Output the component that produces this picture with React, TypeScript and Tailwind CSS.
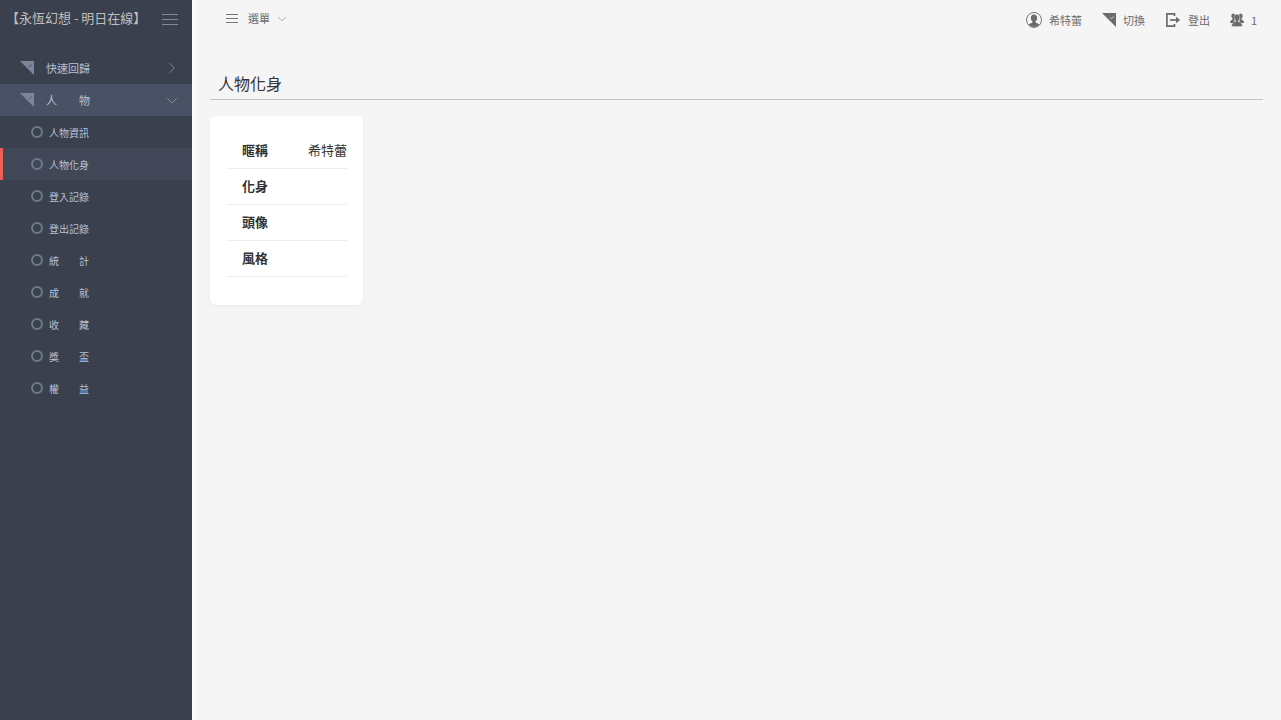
import type { ReactNode } from "react";

const characterLinks = [
  "人物資訊",
  "人物化身",
  "登入記錄",
  "登出記錄",
  "統　　計",
  "成　　就",
  "收　　藏",
  "獎　　盃",
  "權　　益",
];

const profileRows = [
  { label: "暱稱", value: "希特蕾" },
  { label: "化身", value: "" },
  { label: "頭像", value: "" },
  { label: "風格", value: "" },
];

const CornerIcon = ({ check }: { check: string }) => (
  <svg viewBox="0 0 14 14" className="w-3.5 h-3.5 shrink-0" fill="currentColor">
    <path d="M0 0H14V14Z" />
    <path d="M8 4.300l1.600 1.400L12 3.400" fill="none" stroke={check} strokeWidth="0.7" />
  </svg>
);

const Chevron = ({ d, className }: { d: string; className: string }) => (
  <svg viewBox="0 0 10 10" className={className} fill="none" stroke="currentColor" strokeWidth="0.8">
    <path d={d} />
  </svg>
);

const UserIcon = () => (
  <svg viewBox="0 0 16 16" className="w-4 h-4" fill="currentColor">
    <circle cx="8" cy="8" r="7.5" fill="none" stroke="currentColor" strokeWidth="0.9" />
    <path d="M8 2.500c-2.100 0-3.200 1.300-3.200 3.200 0 1.500.6 2.800 1.600 3.600v1.100c-.3.6-3.100 1-3.900 2.100A6.800 6.800 0 0 0 8 14.900a6.800 6.800 0 0 0 5.500-2.400c-.8-1.100-3.600-1.500-3.900-2.100V9.300c1-.8 1.600-2.100 1.600-3.600 0-1.900-1.100-3.200-3.200-3.200z" />
  </svg>
);

const LogoutIcon = () => (
  <svg viewBox="0 0 16 16" className="w-4 h-4" fill="none" stroke="currentColor" strokeWidth="1.7">
    <path d="M9.500 4V1.900H1.900V14.100H9.500V12" />
    <path d="M5 8H11.500" />
    <path d="M11 4.700L15.200 8L11 11.300Z" fill="currentColor" stroke="none" />
  </svg>
);

const UsersIcon = () => (
  <svg viewBox="0 0 14 14" className="w-3.5 h-3.5" fill="currentColor">
    <ellipse cx="3.300" cy="3" rx="2" ry="2.600" />
    <ellipse cx="10.700" cy="3" rx="2" ry="2.600" />
    <path d="M0 10C0 7.400 1.500 7 2.500 6.500V5h2v5H0zM14 10c0-2.600-1.500-3-2.500-3.500V5h-2v5H14z" />
    <path
      d="M7 1.200c-1.800 0-2.800 1.300-2.800 3.200 0 1.500.6 2.700 1.500 3.400v.7C4.800 9.200 1.600 9.500 1.600 13.600h10.800c0-4.100-3.200-4.400-4.100-5.100v-.7c.9-.7 1.500-1.900 1.500-3.400 0-1.900-1-3.200-2.800-3.200z"
      stroke="#f5f5f5"
      strokeWidth="0.4"
    />
  </svg>
);

const TopLink = ({ icon, children }: { icon: ReactNode; children: ReactNode }) => (
  <a href="#" className="flex items-center gap-[7px]">
    {icon}
    <span>{children}</span>
  </a>
);

const Sidebar = () => (
  <aside className="w-48 shrink-0 bg-[#3a404d] text-[#b8c1d6]">
    <div className="flex items-center justify-between h-9 pl-1.5 pr-3.5 text-[13px] text-[#bfbfbf]">
      <a href="#">【永恆幻想 - 明日在線】</a>
      <button aria-label="收合選單" className="flex flex-col gap-1 w-4 pt-0.5 text-[#848993]">
        <span className="h-px w-full bg-current" />
        <span className="h-px w-full bg-current" />
        <span className="h-px w-full bg-current" />
      </button>
    </div>
    <nav className="pt-4">
      <a href="#" className="flex items-center h-8 pl-5 pr-3.5 text-[11px]">
        <span className="text-[#7c869b]"><CornerIcon check="#3a404d" /></span>
        <span className="pl-3 grow">快速回歸</span>
        <Chevron d="M3 1L7 5L3 9" className="w-3 h-3 text-[#838a98]" />
      </a>
      <a href="#" className="flex items-center h-8 pl-5 pr-3.5 text-[11px] bg-[#495164]">
        <span className="text-[#7c869b]"><CornerIcon check="#495164" /></span>
        <span className="pl-3 grow">人　　物</span>
        <Chevron d="M1 3.500L5 7.500L9 3.500" className="w-3 h-3 text-[#838a98]" />
      </a>
      <ul>
        {characterLinks.map((name) => (
          <li key={name}>
            <a
              href="#"
              className={
                name === "人物化身"
                  ? "flex items-center gap-1.5 h-8 pl-7 text-[10px] border-l-3 border-[#ea6153] bg-[#414756]"
                  : "flex items-center gap-1.5 h-8 pl-7 text-[10px] border-l-3 border-transparent"
              }
            >
              <span className="w-3 h-3 rounded-full border-2 border-[#6c7a89]" />
              {name}
            </a>
          </li>
        ))}
      </ul>
    </nav>
  </aside>
);

const Topbar = () => (
  <header className="flex items-start justify-between h-[68px] text-[11px] text-[#6b6b6b]">
    <button className="flex items-center h-9 pl-4">
      <span className="flex flex-col gap-[3px] w-3">
        <span className="h-px bg-[#777]" />
        <span className="h-px bg-[#777]" />
        <span className="h-px bg-[#777]" />
      </span>
      <span className="pl-2.5 pr-2">選單</span>
      <Chevron d="M0 3.500L5 8.500L10 3.500" className="w-2 h-2 text-[#888]" />
    </button>
    <div className="flex items-center h-10 gap-5 pr-1.5">
      <TopLink icon={<UserIcon />}>希特蕾</TopLink>
      <TopLink icon={<CornerIcon check="#f5f5f5" />}>切換</TopLink>
      <TopLink icon={<LogoutIcon />}>登出</TopLink>
      <TopLink icon={<UsersIcon />}>1</TopLink>
    </div>
  </header>
);

const App = () => {
  return (
    <div className="flex min-h-screen bg-[#f5f5f5] font-['Noto_Sans_CJK_TC',sans-serif]">
      <Sidebar />
      <div className="w-1 shrink-0 bg-[#fafafa]" />
      <div className="grow min-w-0 pl-3.5 pr-[18px]">
        <Topbar />
        <main>
          <h1 className="h-8 pl-2 text-[16px] leading-[30px] text-[#333] border-b border-[#c4c4c4]">人物化身</h1>
          <section className="w-[153px] mt-4 px-4 pt-4 pb-7 bg-white rounded-md shadow-[0_1px_3px_rgba(0,0,0,0.06)]">
            <table className="w-full text-[13px] text-[#333]">
              <tbody>
                {profileRows.map((row) => (
                  <tr key={row.label} className="h-9 border-b border-[#eee]">
                    <th scope="row" className="pl-4 text-left font-bold">{row.label}</th>
                    <td className="text-right">{row.value}</td>
                  </tr>
                ))}
              </tbody>
            </table>
          </section>
        </main>
      </div>
    </div>
  );
};

export default App;
